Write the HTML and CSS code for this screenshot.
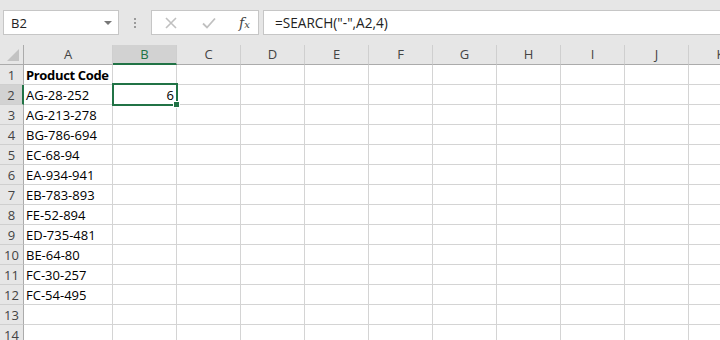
FILE: index.html
```html
<!DOCTYPE html>
<html lang="en">
<head>
    <meta charset="UTF-8">
    <title>Book1 - Excel</title>
    <link rel="stylesheet" href="styles.css">
</head>
<body>
    <div class="toolbar">
        <div class="name-box">
            <span>B2</span>
            <span class="caret"></span>
        </div>
        <div class="grip"><i></i><i></i><i></i></div>
        <div class="fx-box">
            <svg class="tool-icon" width="12" height="12" viewBox="0 0 12 12">
                <path d="M1 1 L11 11 M11 1 L1 11" stroke="#c0c0c0" stroke-width="1.6" fill="none"/>
            </svg>
            <svg class="tool-icon" width="14" height="12" viewBox="0 0 14 12">
                <path d="M1 6.5 L5 10.5 L13 1.5" stroke="#c0c0c0" stroke-width="1.8" fill="none"/>
            </svg>
            <span class="fx">f<sub>x</sub></span>
        </div>
        <div class="formula">=SEARCH("-",A2,4)</div>
    </div>

    <div class="sheet">
        <div class="corner"><span class="corner-tri"></span></div>
        <div class="col-head">A</div>
        <div class="col-head active">B</div>
        <div class="col-head">C</div>
        <div class="col-head">D</div>
        <div class="col-head">E</div>
        <div class="col-head">F</div>
        <div class="col-head">G</div>
        <div class="col-head">H</div>
        <div class="col-head">I</div>
        <div class="col-head">J</div>
        <div class="col-head">K</div>

        <div class="row-head">1</div><div class="cell bold">Product Code</div><div class="cell"></div><div class="cell"></div><div class="cell"></div><div class="cell"></div><div class="cell"></div><div class="cell"></div><div class="cell"></div><div class="cell"></div><div class="cell"></div><div class="cell"></div>
        <div class="row-head active">2</div><div class="cell">AG-28-252</div><div class="cell num selected">6</div><div class="cell"></div><div class="cell"></div><div class="cell"></div><div class="cell"></div><div class="cell"></div><div class="cell"></div><div class="cell"></div><div class="cell"></div><div class="cell"></div>
        <div class="row-head">3</div><div class="cell">AG-213-278</div><div class="cell"></div><div class="cell"></div><div class="cell"></div><div class="cell"></div><div class="cell"></div><div class="cell"></div><div class="cell"></div><div class="cell"></div><div class="cell"></div><div class="cell"></div>
        <div class="row-head">4</div><div class="cell">BG-786-694</div><div class="cell"></div><div class="cell"></div><div class="cell"></div><div class="cell"></div><div class="cell"></div><div class="cell"></div><div class="cell"></div><div class="cell"></div><div class="cell"></div><div class="cell"></div>
        <div class="row-head">5</div><div class="cell">EC-68-94</div><div class="cell"></div><div class="cell"></div><div class="cell"></div><div class="cell"></div><div class="cell"></div><div class="cell"></div><div class="cell"></div><div class="cell"></div><div class="cell"></div><div class="cell"></div>
        <div class="row-head">6</div><div class="cell">EA-934-941</div><div class="cell"></div><div class="cell"></div><div class="cell"></div><div class="cell"></div><div class="cell"></div><div class="cell"></div><div class="cell"></div><div class="cell"></div><div class="cell"></div><div class="cell"></div>
        <div class="row-head">7</div><div class="cell">EB-783-893</div><div class="cell"></div><div class="cell"></div><div class="cell"></div><div class="cell"></div><div class="cell"></div><div class="cell"></div><div class="cell"></div><div class="cell"></div><div class="cell"></div><div class="cell"></div>
        <div class="row-head">8</div><div class="cell">FE-52-894</div><div class="cell"></div><div class="cell"></div><div class="cell"></div><div class="cell"></div><div class="cell"></div><div class="cell"></div><div class="cell"></div><div class="cell"></div><div class="cell"></div><div class="cell"></div>
        <div class="row-head">9</div><div class="cell">ED-735-481</div><div class="cell"></div><div class="cell"></div><div class="cell"></div><div class="cell"></div><div class="cell"></div><div class="cell"></div><div class="cell"></div><div class="cell"></div><div class="cell"></div><div class="cell"></div>
        <div class="row-head">10</div><div class="cell">BE-64-80</div><div class="cell"></div><div class="cell"></div><div class="cell"></div><div class="cell"></div><div class="cell"></div><div class="cell"></div><div class="cell"></div><div class="cell"></div><div class="cell"></div><div class="cell"></div>
        <div class="row-head">11</div><div class="cell">FC-30-257</div><div class="cell"></div><div class="cell"></div><div class="cell"></div><div class="cell"></div><div class="cell"></div><div class="cell"></div><div class="cell"></div><div class="cell"></div><div class="cell"></div><div class="cell"></div>
        <div class="row-head">12</div><div class="cell">FC-54-495</div><div class="cell"></div><div class="cell"></div><div class="cell"></div><div class="cell"></div><div class="cell"></div><div class="cell"></div><div class="cell"></div><div class="cell"></div><div class="cell"></div><div class="cell"></div>
        <div class="row-head">13</div><div class="cell"></div><div class="cell"></div><div class="cell"></div><div class="cell"></div><div class="cell"></div><div class="cell"></div><div class="cell"></div><div class="cell"></div><div class="cell"></div><div class="cell"></div><div class="cell"></div>
        <div class="row-head">14</div><div class="cell"></div><div class="cell"></div><div class="cell"></div><div class="cell"></div><div class="cell"></div><div class="cell"></div><div class="cell"></div><div class="cell"></div><div class="cell"></div><div class="cell"></div><div class="cell"></div>
    </div>
</body>
</html>
```

FILE: styles.css
```css
body {
    margin: 0;
    background-color: #fff;
    font-family: "Open Sans", "Noto Sans", sans-serif;
    color: #000;
    overflow: hidden;
}
.toolbar {
    display: flex;
    align-items: flex-start;
    height: 45px;
    padding: 10px 0 0 3px;
    box-sizing: border-box;
    background-color: #e6e6e6;
}
.name-box {
    display: flex;
    align-items: center;
    justify-content: space-between;
    width: 116px;
    height: 25px;
    box-sizing: border-box;
    padding: 0 6px 0 7px;
    background-color: #fff;
    border: 1px solid #c6c6c6;
    font-size: 13px;
    color: #222;
}
.caret {
    width: 0;
    height: 0;
    border-left: 4px solid transparent;
    border-right: 4px solid transparent;
    border-top: 4px solid #777;
}
.grip {
    display: flex;
    flex-direction: column;
    align-items: center;
    gap: 2px;
    width: 32px;
    padding-top: 8px;
}
.grip i {
    display: block;
    width: 2px;
    height: 2px;
    background-color: #9a9a9a;
}
.fx-box {
    display: flex;
    align-items: center;
    width: 108px;
    height: 25px;
    box-sizing: border-box;
    padding-left: 13px;
    background-color: #fff;
    border: 1px solid #c6c6c6;
}
.tool-icon {
    margin-right: 25px;
}
.fx {
    font-family: "DejaVu Serif", "Liberation Serif", serif;
    font-style: italic;
    font-size: 14px;
    color: #444;
    margin-left: -2px;
}
.fx sub {
    font-size: 10px;
    vertical-align: 0;
}
.formula {
    flex: 1;
    height: 25px;
    box-sizing: border-box;
    margin-left: 4px;
    padding-left: 11px;
    background-color: #fff;
    border: 1px solid #c6c6c6;
    border-right: none;
    font-size: 13.6px;
    line-height: 23px;
    color: #222;
}
.sheet {
    display: grid;
    grid-template-columns: 24px 89px repeat(10, 64px);
    grid-auto-rows: 20px;
}
.corner {
    position: relative;
    background-color: #e6e6e6;
    border-right: 1px solid #ababab;
    border-bottom: 1px solid #ababab;
}
.corner-tri {
    position: absolute;
    right: 4px;
    bottom: 3px;
    width: 0;
    height: 0;
    border-left: 12px solid transparent;
    border-bottom: 12px solid #c2c2c2;
}
.col-head {
    background-color: #e6e6e6;
    border-right: 1px solid #cfcfcf;
    border-bottom: 1px solid #ababab;
    text-align: center;
    font-size: 13px;
    line-height: 19px;
    color: #444;
}
.col-head.active {
    background-color: #d2d2d2;
    color: #217346;
    border-bottom: 2px solid #217346;
    line-height: 18px;
}
.row-head {
    background-color: #e6e6e6;
    border-right: 1px solid #ababab;
    border-bottom: 1px solid #cfcfcf;
    text-align: center;
    font-size: 13px;
    line-height: 20px;
    color: #444;
}
.row-head.active {
    background-color: #d2d2d2;
    border-right: 2px solid #217346;
}
.cell {
    border-right: 1px solid #d4d4d4;
    border-bottom: 1px solid #d4d4d4;
    padding: 0 2px;
    font-size: 13px;
    line-height: 20px;
    white-space: nowrap;
}
.cell.bold {
    font-weight: bold;
    letter-spacing: -0.35px;
}
.cell.num {
    text-align: right;
}
.cell.selected {
    position: relative;
}
.cell.selected::after {
    content: "";
    position: absolute;
    top: -2px;
    left: -1px;
    right: -2px;
    bottom: -2px;
    border: 2px solid #217346;
}
.cell.selected::before {
    content: "";
    position: absolute;
    right: -4px;
    bottom: -4px;
    width: 5px;
    height: 5px;
    background-color: #217346;
    border: 1px solid #fff;
    z-index: 1;
}
```
